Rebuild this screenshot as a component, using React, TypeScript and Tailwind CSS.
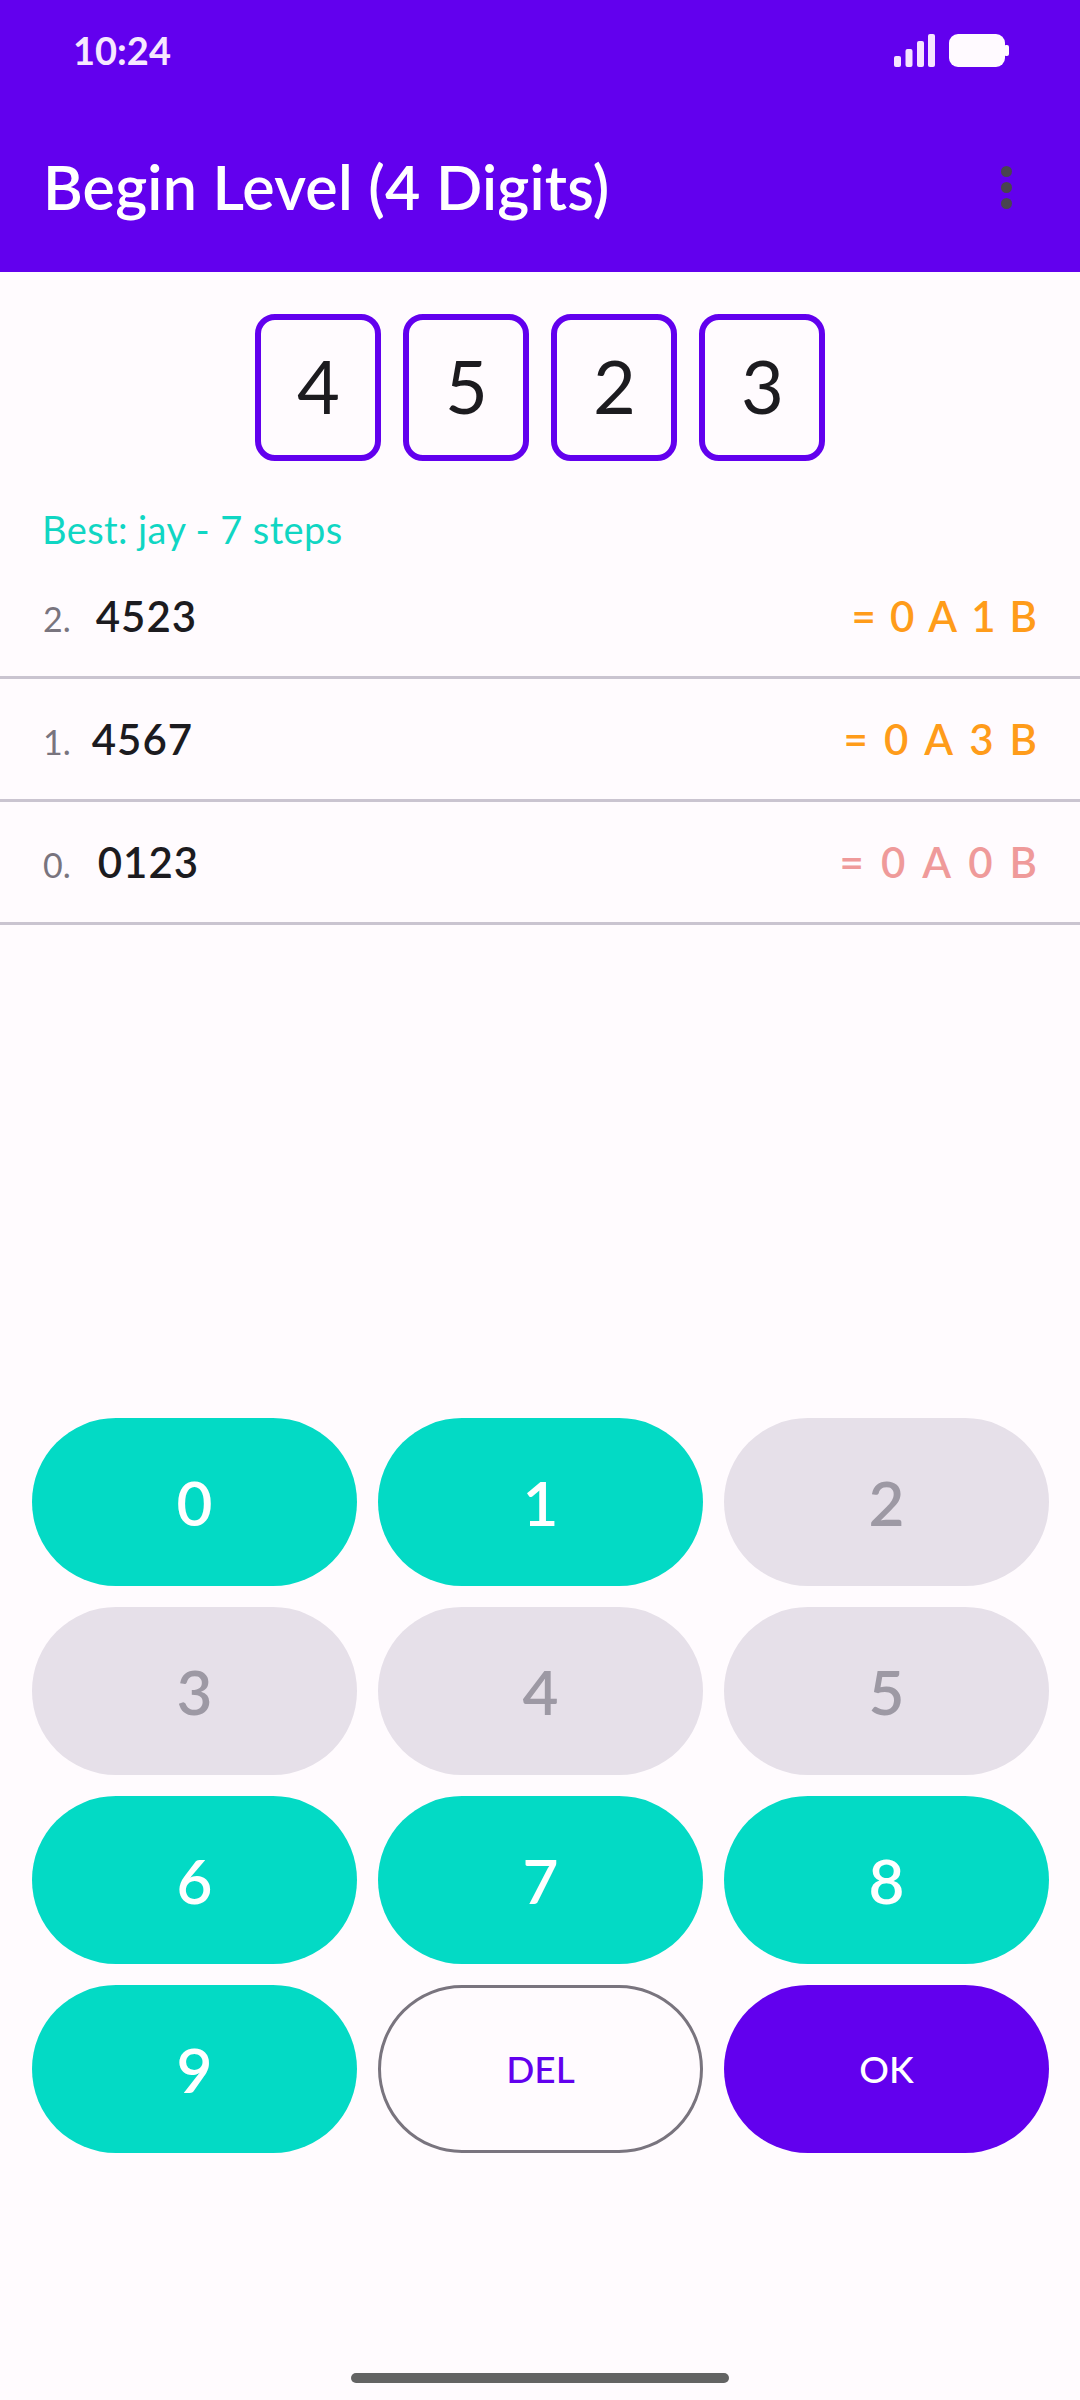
import React from "react";

const digits = ["4", "5", "2", "3"];
const rows = [
  { n: "2.", g: "4523", r: ["=", "0", "A", "1", "B"], c: "text-[#ff9c1a] gap-[14px]", gap: "gap-[25px]" },
  { n: "1.", g: "4567", r: ["=", "0", "A", "3", "B"], c: "text-[#ff9c1a] gap-[16px]", gap: "gap-[21px]" },
  { n: "0.", g: "0123", r: ["=", "0", "A", "0", "B"], c: "text-[#ef9a9a] gap-[17px]", gap: "gap-[27px]" },
];
const keys = [
  { t: "0", on: true }, { t: "1", on: true }, { t: "2", on: false },
  { t: "3", on: false }, { t: "4", on: false }, { t: "5", on: false },
  { t: "6", on: true }, { t: "7", on: true }, { t: "8", on: true },
  { t: "9", on: true },
];

export default function App() {
  return (
    <div className="flex h-[2400px] w-[1080px] flex-col overflow-hidden bg-[#fffbfe] font-['Lato','Noto_Sans',sans-serif]">
      <header className="flex h-[272px] flex-col bg-[#6200ee] text-white">
        <div className="flex h-[100px] items-center justify-between pl-[73px] pr-[71px]">
          <span className="text-[38px] font-bold leading-none text-[#f6e8ff]">10:24</span>
          <div className="flex items-center gap-[14px]">
            <svg width="41" height="33" viewBox="0 0 41 33" fill="#f6e4ff">
              <rect x="0" y="22" width="7" height="11" rx="2" />
              <rect x="11.5" y="15" width="7" height="18" rx="2" />
              <rect x="23" y="7" width="7" height="26" rx="2" />
              <rect x="34" y="0" width="7" height="33" rx="2" />
            </svg>
            <svg width="60" height="33" viewBox="0 0 60 33" fill="#fffaff">
              <rect x="0" y="0" width="56" height="33" rx="9" />
              <rect x="55" y="11" width="5" height="11" rx="2" />
            </svg>
          </div>
        </div>
        <div className="flex flex-1 items-center justify-between pt-[1px] pl-[43px] pr-[68px]">
          <h1 className="text-[61px] font-semibold leading-none tracking-[0.2px]">Begin Level (4 Digits)</h1>
          <div className="mt-[2px] flex flex-col gap-[5px]">
            <span className="h-[11px] w-[11px] rounded-full bg-[#49454f]" />
            <span className="h-[11px] w-[11px] rounded-full bg-[#49454f]" />
            <span className="h-[11px] w-[11px] rounded-full bg-[#49454f]" />
          </div>
        </div>
      </header>

      <div className="mt-[42px] flex justify-center gap-[22px] pr-[1px]">
        {digits.map((d) => (
          <div
            key={d}
            className="flex h-[147px] w-[126px] items-center justify-center rounded-[20px] border-[6px] border-[#6200ee] pb-[3px] pl-[2px] text-[74px] font-normal leading-none text-[#1c1b1f]"
          >
            {d}
          </div>
        ))}
      </div>

      <p className="mt-[46px] pl-[42px] text-[38px] leading-[44px] tracking-[0.4px] text-[#10d6c3]">Best: jay - 7 steps</p>

      <div className="mt-[5px] flex flex-col">
        {rows.map((row) => (
          <div
            key={row.n}
            className="flex h-[123px] items-center justify-between border-b-[3px] border-[#cac4d0] pl-[43px] pr-[43px]"
          >
            <div className={`flex items-baseline ${row.gap}`}>
              <span className="text-[34px] text-[#79747e]">{row.n}</span>
              <span className="text-[42px] font-semibold tracking-[1px] text-[#1c1b1f]">{row.g}</span>
            </div>
            <div className={`flex text-[42px] font-semibold ${row.c}`}>
              {row.r.map((c, i) => (
                <span key={i}>{c}</span>
              ))}
            </div>
          </div>
        ))}
      </div>

      <div className="mt-[493px] grid grid-cols-3 gap-x-[21px] gap-y-[21px] pl-[32px] pr-[31px]">
        {keys.map((k) => (
          <div
            key={k.t}
            className={
              k.on
                ? "flex h-[168px] items-center justify-center rounded-full bg-[#03dac5] text-[62px] font-semibold text-white"
                : "flex h-[168px] items-center justify-center rounded-full bg-[#e6e0e9] text-[62px] font-semibold text-[#9d99a4]"
            }
          >
            {k.t}
          </div>
        ))}
        <div className="flex h-[168px] items-center justify-center rounded-full border-[3px] border-[#79747e] text-[37px] font-medium text-[#6200ee]">
          DEL
        </div>
        <div className="flex h-[168px] items-center justify-center rounded-full bg-[#6200ee] text-[37px] font-medium text-white">
          OK
        </div>
      </div>

      <div className="mt-auto mb-[17px] h-[10px] w-[378px] self-center rounded-full bg-[#636363]" />
    </div>
  );
}
